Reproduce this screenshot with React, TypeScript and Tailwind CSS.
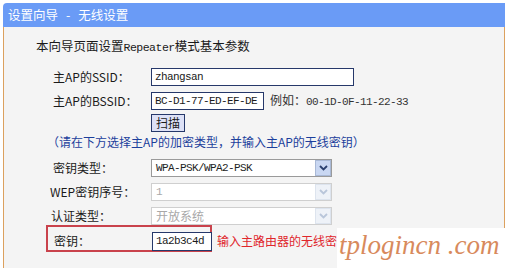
import type { ReactNode } from 'react'

const mono = "font-['Liberation_Mono',monospace] text-[11px] tracking-[-0.6px]"

function Row({ label, children, labelPad = 'pl-[49px]' }: { label: string; children: ReactNode; labelPad?: string }) {
  return (
    <div className={`flex items-center h-[18px] ${labelPad}`}>
      <div className="shrink-0 w-[98px] leading-[18px] whitespace-nowrap">{label}</div>
      {children}
    </div>
  )
}

function Select({ value, disabled, cjk }: { value: string; disabled?: boolean; cjk?: boolean }) {
  return (
    <div
      className={`flex items-center w-[181px] h-[18px] border bg-white ${
        disabled ? 'border-[#cfcfcf] text-[#a8a8a8]' : 'border-[#9a9a9a] text-[#222]'
      }`}
    >
      <div className={`flex-1 pl-[4px] leading-[16px] ${cjk ? '' : mono}`}>{value}</div>
      <div
        className={`flex items-center justify-center w-[16px] h-[16px] border ${
          disabled ? 'border-[#dde4ee] bg-[#eef2f8]' : 'border-[#a9b9d6] bg-[#c9d7f2]'
        }`}
      >
        <svg width="9" height="6" viewBox="0 0 9 6">
          <path
            d="M1 1 L4.5 4.5 L8 1"
            fill="none"
            stroke={disabled ? '#b9c6da' : '#2a3f6e'}
            strokeWidth="1.8"
          />
        </svg>
      </div>
    </div>
  )
}

export default function App() {
  return (
    <div className="relative w-[513px] h-[268px] overflow-hidden bg-white font-['Noto_Sans_CJK_SC',sans-serif] text-[12px] text-[#1a1a1a]">
      <div className="ml-[3px] pt-[3px] w-[502px]">
        <div className="h-[24px] rounded-tl-[4px] bg-[#6a9bf6] pl-[5px] text-[12.5px] leading-[24px] text-white whitespace-nowrap">
          设置向导<span className="mx-[8px]">-</span>无线设置
        </div>
        <div className="h-[241px] border-l border-r border-[#dca15e] bg-[#f4f4f4] pt-[10px]">
          <div className="pl-[32px] h-[18px] leading-[18px] text-[12.5px] whitespace-nowrap">
            本向导页面设置<span className="font-['Liberation_Mono',monospace] text-[11.5px] tracking-[-0.5px]">Repeater</span>模式基本参数
          </div>

          <div className="mt-[13px]">
            <Row label="主AP的SSID：">
              <div className={`w-[203px] h-[18px] border border-[#26386a] bg-white pl-[3px] leading-[16px] ${mono}`}>
                zhangsan
              </div>
            </Row>
            <div className="mt-[6px]">
              <Row label="主AP的BSSID：">
                <div className={`w-[113px] h-[18px] border border-[#26386a] bg-white pl-[3px] leading-[16px] ${mono}`}>
                  BC-D1-77-ED-EF-DE
                </div>
                <div className="ml-[6px] whitespace-nowrap text-[#333]">
                  例如：<span className={mono}>00-1D-0F-11-22-33</span>
                </div>
              </Row>
            </div>
            <div className="mt-[4px] pl-[147px]">
              <div className="w-[34px] h-[18px] border border-[#26386a] bg-[#dde1f6] text-center leading-[16px]">扫描</div>
            </div>
            <div className="mt-[1px] pl-[43px] h-[18px] leading-[18px] text-[#1c3f9c] whitespace-nowrap">
              （请在下方选择主AP的加密类型，并输入主AP的无线密钥）
            </div>
            <div className="mt-[8px]">
              <Row label="密钥类型：">
                <Select value="WPA-PSK/WPA2-PSK" />
              </Row>
            </div>
            <div className="mt-[6px]">
              <Row label="WEP密钥序号：" labelPad="pl-[46px]">
                <div className="pl-[3px]">
                  <Select value="1" disabled />
                </div>
              </Row>
            </div>
            <div className="mt-[6px]">
              <Row label="认证类型：" labelPad="pl-[47px]">
                <div className="pl-[2px]">
                  <Select value="开放系统" disabled cjk />
                </div>
              </Row>
            </div>
            <div className="flex items-end pl-[42px]">
              <div className="flex items-end w-[166px] h-[27px] border-2 border-[#c9424c] pl-[6px]">
                <div className="shrink-0 w-[98px] h-[18px] leading-[18px]">密钥：</div>
                <div className={`shrink-0 w-[60px] h-[19px] -mr-[2px] -mb-[1px] border border-[#26386a] bg-white pl-[3px] leading-[17px] ${mono}`}>
                  1a2b3c4d
                </div>
              </div>
              <div className="ml-[5px] mb-[2px] h-[18px] leading-[18px] text-[#e0262c] whitespace-nowrap">
                输入主路由器的无线密钥
              </div>
            </div>
          </div>
        </div>
      </div>

      <div className="absolute left-[337px] top-[228px] right-0 bottom-0 bg-white">
        <div className="pl-[2px] leading-[34px] text-[27px] italic font-['Liberation_Serif',serif] text-[#d88a5c] whitespace-nowrap">
          tplogincn .com
        </div>
      </div>
    </div>
  )
}
